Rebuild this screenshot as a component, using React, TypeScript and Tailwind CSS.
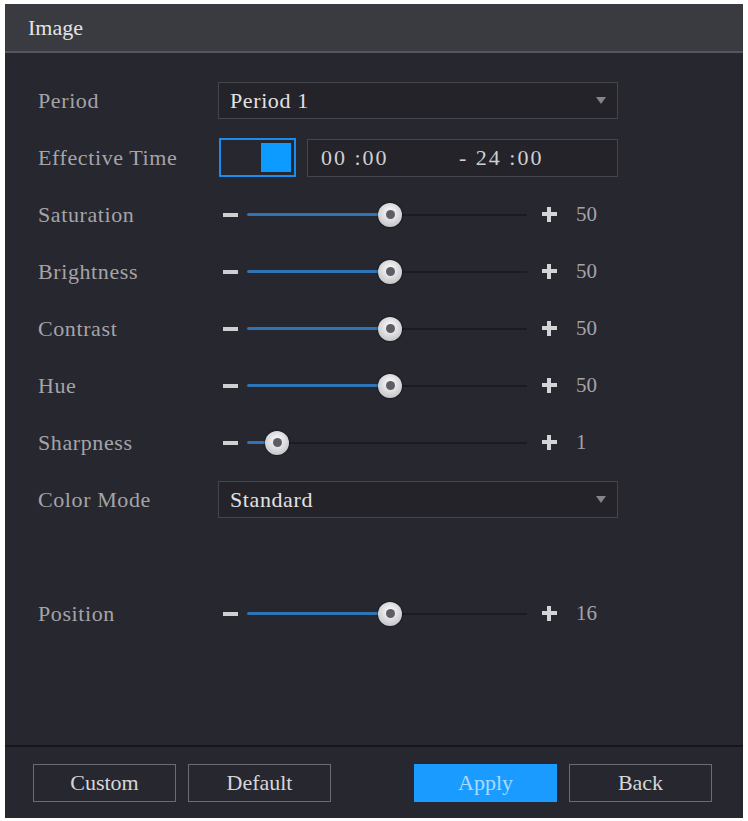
import React from "react";

const serif = { fontFamily: '"Liberation Serif", "Times New Roman", serif' };

type SliderRow = { label: string; value: number; thumb: number };

const sliders: SliderRow[] = [
  { label: "Saturation", value: 50, thumb: 143 },
  { label: "Brightness", value: 50, thumb: 143 },
  { label: "Contrast", value: 50, thumb: 143 },
  { label: "Hue", value: 50, thumb: 143 },
  { label: "Sharpness", value: 1, thumb: 30 },
];

const Row = ({ label, children }: { label: string; children: React.ReactNode }) => (
  <div className="flex h-[57px] items-center">
    <div className="w-[180px] text-[22px] tracking-[0.6px] text-[#a4a4a9]">{label}</div>
    {children}
  </div>
);

const Dropdown = ({ value }: { value: string }) => (
  <div className="flex h-[37px] w-[400px] items-center justify-between border border-[#45454c] bg-[#232329] pl-[11px] pr-[11px]">
    <span className="text-[22px] tracking-[0.6px] text-[#e2e2e4]">{value}</span>
    <svg width="10" height="8" viewBox="0 0 10 8">
      <path d="M0 0 H10 L5 7 Z" fill="#85858c" />
    </svg>
  </div>
);

const Slider = ({ value, thumb }: { value: number; thumb: number }) => (
  <div className="flex items-center">
    <div className="ml-[5px] h-[4px] w-[15px] bg-[#cfcfd2]" />
    <div className="relative ml-[9px] h-[24px] w-[280px]">
      <div className="absolute left-0 right-0 top-[11px] h-[2px] bg-[#1b1b21]" />
      <div
        className="absolute left-0 top-[10px] h-[3px] rounded-full bg-[#2f74b4]"
        style={{ width: thumb }}
      />
      <div
        className="absolute top-0 flex h-[24px] w-[24px] items-center justify-center rounded-full bg-[radial-gradient(circle_at_50%_40%,#ffffff,#b4b4b9)] shadow-[0_0_2px_#000]"
        style={{ left: thumb - 12 }}
      >
        <div className="h-[9px] w-[9px] rounded-full bg-[#5d5d66]" />
      </div>
    </div>
    <div className="relative ml-[15px] h-[15px] w-[15px]">
      <div className="absolute left-0 top-[5px] h-[4px] w-[15px] bg-[#d4d4d7]" />
      <div className="absolute left-[5px] top-0 h-[15px] w-[4px] bg-[#d4d4d7]" />
    </div>
    <span className="ml-[19px] text-[21px] text-[#a4a4a9]">{value}</span>
  </div>
);

const Button = ({ label, primary }: { label: string; primary?: boolean }) => (
  <div
    className={
      primary
        ? "flex h-[38px] w-[143px] items-center justify-center bg-[#1a9bff] text-[22px] text-[#a9dcff]"
        : "flex h-[38px] w-[143px] items-center justify-center border border-[#6b6b72] text-[22px] text-[#d6d6d9]"
    }
  >
    {label}
  </div>
);

export default function App() {
  return (
    <div className="min-h-screen bg-white pl-[5px] pt-[4px]" style={serif}>
      <div className="flex h-[814px] w-[738px] flex-col bg-[#27272f]">
        <div className="flex h-[49px] items-center border-b-2 border-[#55575c] bg-[#3a3b40] pl-[23px]">
          <span className="text-[22px] text-[#e4e4e6]">Image</span>
        </div>

        <div className="flex-1 pl-[33px] pt-[19px]">
          <Row label="Period">
            <Dropdown value="Period 1" />
          </Row>
          <Row label="Effective Time">
            <div className="ml-[1px] flex h-[39px] w-[77px] justify-end border-2 border-[#1a8cf0] p-[3px]">
              <div className="h-full w-[30px] bg-[#0e9bff]" />
            </div>
            <div className="ml-[11px] flex h-[38px] w-[311px] items-center border border-[#45454c] bg-[#232329] pl-[13px] text-[22px] text-[#cfcfd3]">
              <span className="w-[138px] tracking-[2px]">00 :00</span>
              <span className="tracking-[2px]">- 24 :00</span>
            </div>
          </Row>
          {sliders.map((s) => (
            <Row key={s.label} label={s.label}>
              <Slider value={s.value} thumb={s.thumb} />
            </Row>
          ))}
          <Row label="Color Mode">
            <Dropdown value="Standard" />
          </Row>
          <div className="h-[57px]" />
          <Row label="Position">
            <Slider value={16} thumb={143} />
          </Row>
        </div>

        <div className="flex h-[73px] items-center border-t-2 border-[#17171b] pl-[28px]">
          <div className="flex gap-[12px]">
            <Button label="Custom" />
            <Button label="Default" />
          </div>
          <div className="ml-[83px] flex gap-[12px]">
            <Button label="Apply" primary />
            <Button label="Back" />
          </div>
        </div>
      </div>
    </div>
  );
}
